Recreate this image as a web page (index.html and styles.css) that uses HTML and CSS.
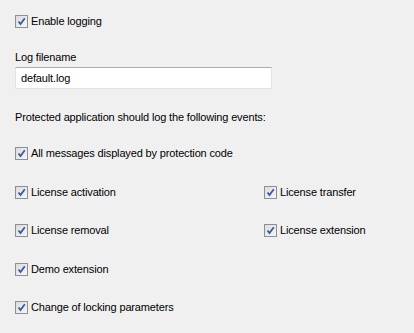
FILE: index.html
```html
<!DOCTYPE html>
<html lang="en">
<head>
    <meta charset="UTF-8">
    <title>Logging settings</title>
    <link rel="stylesheet" href="styles.css">
</head>
<body>
    <div class="panel">
        <label class="check first">
            <span class="box"><svg width="9" height="9" viewBox="0 0 9 9"><path d="M1.5 4.5 L3.5 7 L7.8 1.2" fill="none" stroke="#3d57a8" stroke-width="1.8"/></svg></span>
            Enable logging
        </label>

        <div class="field">
            <div class="field-label">Log filename</div>
            <div class="input">default.log</div>
        </div>

        <p class="note">Protected application should log the following events:</p>

        <div class="events">
            <label class="check wide">
                <span class="box"><svg width="9" height="9" viewBox="0 0 9 9"><path d="M1.5 4.5 L3.5 7 L7.8 1.2" fill="none" stroke="#3d57a8" stroke-width="1.8"/></svg></span>
                All messages displayed by protection code
            </label>
            <label class="check">
                <span class="box"><svg width="9" height="9" viewBox="0 0 9 9"><path d="M1.5 4.5 L3.5 7 L7.8 1.2" fill="none" stroke="#3d57a8" stroke-width="1.8"/></svg></span>
                License activation
            </label>
            <label class="check">
                <span class="box"><svg width="9" height="9" viewBox="0 0 9 9"><path d="M1.5 4.5 L3.5 7 L7.8 1.2" fill="none" stroke="#3d57a8" stroke-width="1.8"/></svg></span>
                License transfer
            </label>
            <label class="check">
                <span class="box"><svg width="9" height="9" viewBox="0 0 9 9"><path d="M1.5 4.5 L3.5 7 L7.8 1.2" fill="none" stroke="#3d57a8" stroke-width="1.8"/></svg></span>
                License removal
            </label>
            <label class="check">
                <span class="box"><svg width="9" height="9" viewBox="0 0 9 9"><path d="M1.5 4.5 L3.5 7 L7.8 1.2" fill="none" stroke="#3d57a8" stroke-width="1.8"/></svg></span>
                License extension
            </label>
            <label class="check wide">
                <span class="box"><svg width="9" height="9" viewBox="0 0 9 9"><path d="M1.5 4.5 L3.5 7 L7.8 1.2" fill="none" stroke="#3d57a8" stroke-width="1.8"/></svg></span>
                Demo extension
            </label>
            <label class="check wide">
                <span class="box"><svg width="9" height="9" viewBox="0 0 9 9"><path d="M1.5 4.5 L3.5 7 L7.8 1.2" fill="none" stroke="#3d57a8" stroke-width="1.8"/></svg></span>
                Change of locking parameters
            </label>
        </div>
    </div>
</body>
</html>
```

FILE: styles.css
```css
body { margin: 0; background: #f0f0f0; font-family: "Liberation Sans", Arial, sans-serif; font-size: 11px; letter-spacing: -0.15px; color: #000; }
.panel { padding: 15px 0 0 15px; width: 399px; height: 318px; }
.check { display: flex; align-items: center; gap: 3px; height: 13px; line-height: 13px; white-space: nowrap; }
.box { width: 11px; height: 11px; border: 1px solid #8e8f8f; background: linear-gradient(135deg, #dcdcdc, #f6f6f6); display: flex; align-items: center; justify-content: center; flex: none; }
.box svg { display: block; }
.field { margin-top: 23px; }
.field-label { height: 13px; line-height: 13px; }
.input { margin-top: 3px; width: 250px; height: 20px; line-height: 20px; padding-left: 5px; background: #fff; border: 1px solid #e2e3ea; border-top-color: #abadb3; }
.note { margin: 22px 0 0 0; height: 13px; line-height: 13px; }
.events { margin-top: 23px; display: grid; grid-template-columns: 249px 1fr; row-gap: 25.5px; }
.events .wide { grid-column: 1 / 3; }
```
